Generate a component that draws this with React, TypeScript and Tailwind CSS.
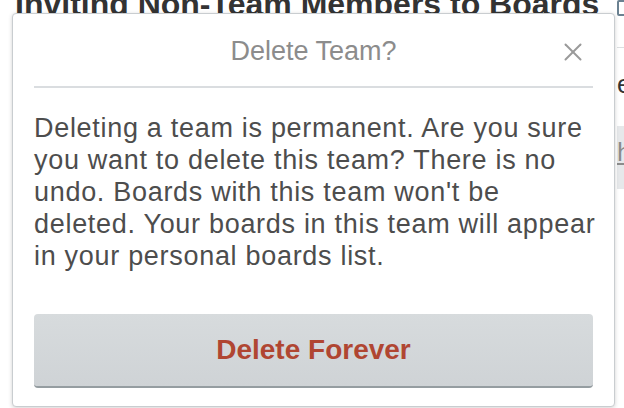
import { X } from 'lucide-react'

const bodyLines = [
  'Deleting a team is permanent. Are you sure',
  "you want to delete this team? There is no",
  "undo. Boards with this team won't be",
  'deleted. Your boards in this team will appear',
  'in your personal boards list.',
]

function BackgroundPage() {
  return (
    <div className="w-[624px] h-[408px] overflow-hidden bg-white">
      <h1 className="-mt-[14px] pl-[15px] whitespace-nowrap text-[32px] font-bold leading-[36px] text-[#333333]">
        Inviting Non-Team Members to Boards
      </h1>
      <div className="-mt-[22px] ml-[617px] w-[7px]">
        <div className="h-[16px] w-[12px] rounded-[2px] border-2 border-[#6b8191]" />
        <div className="h-[32px] border-b border-[#dcdfe1]" />
        <div className="pt-[20px] text-[26px] leading-[32px] text-[#333333]">e</div>
        <div className="mt-[26px] h-[63px] bg-[#e6e8ea] pt-[10px] text-[26px] leading-[32px] text-[#8c8c8c] underline">
          h
        </div>
      </div>
    </div>
  )
}

export default function App() {
  return (
    <div
      className="relative w-[624px] h-[408px] overflow-hidden"
      style={{ fontFamily: '"Liberation Sans", Arial, sans-serif' }}
    >
      <BackgroundPage />

      <div className="absolute left-[12px] top-[13px] w-[603px] h-[394px] rounded-[4px] border border-[#c9cdd0] bg-white shadow-[0_1px_4px_rgba(0,0,0,0.18)] px-[21px]">
        <div className="relative h-[74px] border-b-2 border-[#dadde0] flex items-center justify-center">
          <span className="text-[27px] leading-[32px] text-[#8c8c8c] pt-[2px]">Delete Team?</span>
          <button className="absolute right-[5px] top-[23px] text-[#9a9a9a]">
            <X className="w-[30px] h-[30px]" strokeWidth={1.6} />
          </button>
        </div>

        <p className="mt-[24px] -mr-[20px] text-[27px] leading-[32px] tracking-[0.7px] text-[#4d4d4d]">
          {bodyLines.map((line) => (
            <span key={line} className="block whitespace-nowrap">
              {line}
            </span>
          ))}
        </p>

        <button className="mt-[42px] w-full h-[74px] rounded-[4px] bg-gradient-to-b from-[#d7dbdd] to-[#cfd3d6] border-b-2 border-[#959da1] text-[28px] font-bold text-[#b04632]">
          Delete Forever
        </button>
      </div>
    </div>
  )
}
